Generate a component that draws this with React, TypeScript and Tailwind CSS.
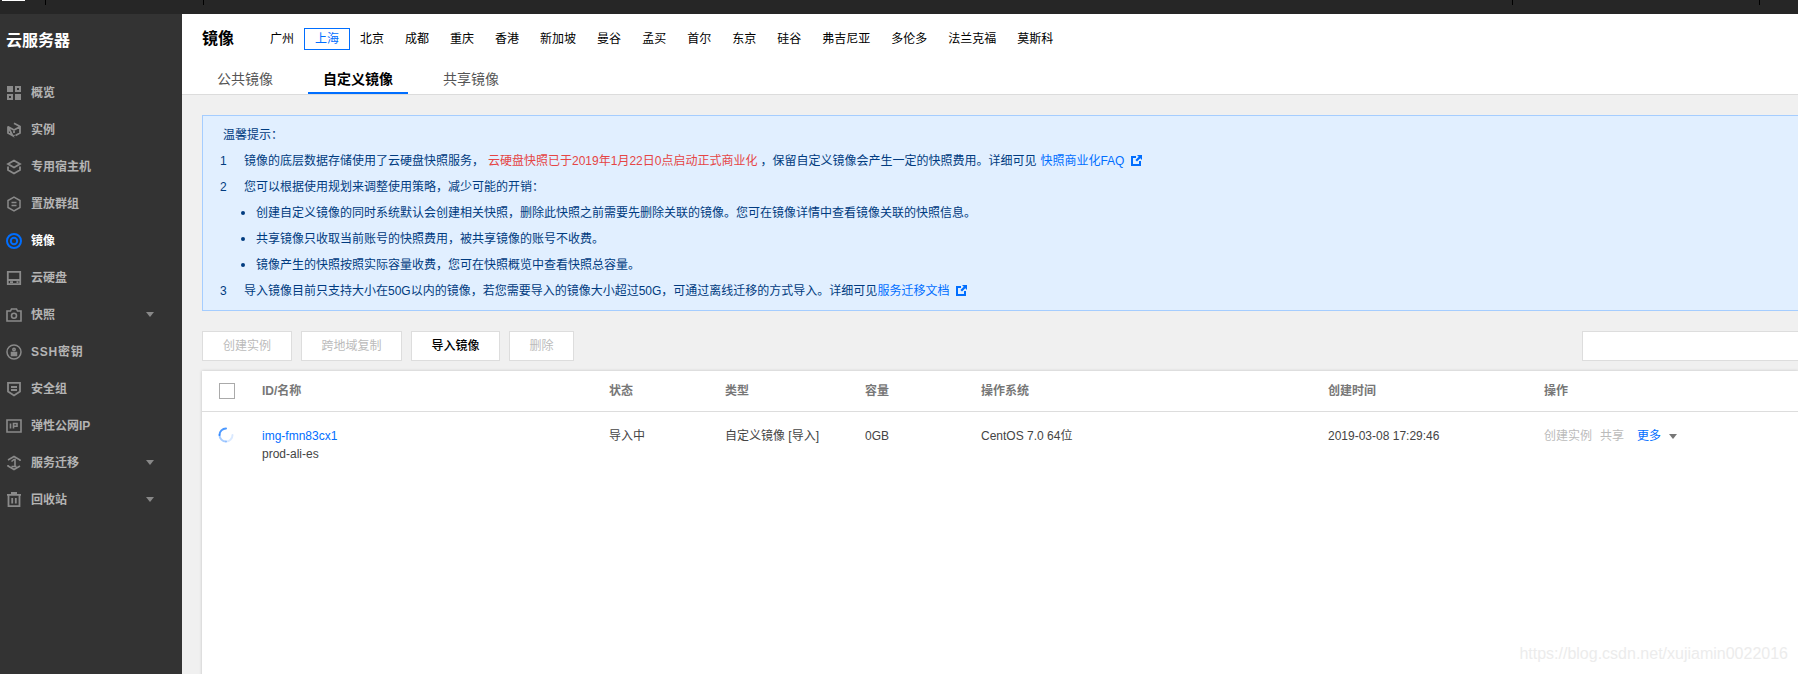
const font = "font-['Liberation_Sans','Noto_Sans_CJK_SC',sans-serif]"

const regions = ["广州", "上海", "北京", "成都", "重庆", "香港", "新加坡", "曼谷", "孟买", "首尔", "东京", "硅谷", "弗吉尼亚", "多伦多", "法兰克福", "莫斯科"]

function NavIcon({ name }: { name: string }) {
  const c = "#8a8a8a"
  const box = "h-4 w-4 shrink-0"
  switch (name) {
    case "overview":
      return (
        <svg className={box} viewBox="0 0 16 16" fill={c}>
          <path d="M1 1h6v6H1zM1 9h6v6H1zM9 9h6v6H9zM9 1h6v6H9zM11 3v2h2V3zM3 11v2h2v-2z" fillRule="evenodd" />
        </svg>
      )
    case "instance":
      return (
        <svg className={box} viewBox="0 0 16 16" fill="none" stroke={c} strokeWidth="1.8">
          <path d="M8 1.200 14 4.500v6.500L9.500 13.500M6.500 13.500 2 11V4.500zM2.500 5 8 8l5.500-3M8 8v3" />
          <circle cx="8" cy="13.500" r="0.800" fill={c} stroke="none" />
        </svg>
      )
    case "host":
      return (
        <svg className={box} viewBox="0 0 16 16" fill="none" stroke={c} strokeWidth="1.8">
          <path d="M8 1.500 14 5 8 8.500 2 5zM2 7.500v3.500L8 14.500l6-3.500V7.500" />
        </svg>
      )
    case "group":
      return (
        <svg className={box} viewBox="0 0 16 16" fill="none" stroke={c} strokeWidth="1.500">
          <path d="M8 1.200 14 4.500v7L8 14.800 2 11.500v-7zM5.500 6.500h5M5.500 9.500h5" />
        </svg>
      )
    case "image":
      return (
        <svg className="h-4 w-4 shrink-0" viewBox="0 0 16 16" fill="none" stroke="#006eff" strokeWidth="2">
          <circle cx="8" cy="8" r="7" />
          <circle cx="8" cy="8" r="3.200" />
        </svg>
      )
    case "disk":
      return (
        <svg className={box} viewBox="0 0 16 16" fill="none" stroke={c} strokeWidth="1.800">
          <path d="M1.800 1.800h12.400v12.400H1.800zM2 10h12M4 12.200h3M10.500 12.200h2" />
        </svg>
      )
    case "snapshot":
      return (
        <svg className={box} viewBox="0 0 16 16" fill="none" stroke={c} strokeWidth="1.600">
          <path d="M1 4h3.500l1-2h5l1 2H15v10H1z" />
          <circle cx="8" cy="8.800" r="2.500" />
        </svg>
      )
    case "ssh":
      return (
        <svg className={box} viewBox="0 0 16 16" fill="none" stroke={c} strokeWidth="1.500">
          <circle cx="8" cy="8" r="7" />
          <path d="M5.500 8.500h5v3h-5z" fill={c} />
          <circle cx="8" cy="5.500" r="1.200" />
        </svg>
      )
    case "security":
      return (
        <svg className={box} viewBox="0 0 16 16" fill="none" stroke={c} strokeWidth="1.800">
          <path d="M2 1.800h12v8.700L8 14.500l-6-4zM5 6h6M5 9h6" />
        </svg>
      )
    case "ip":
      return (
        <svg className={box} viewBox="0 0 16 16" fill="none" stroke={c} strokeWidth="1.600">
          <path d="M1 2h14v12H1zM4.500 5.500v5M7.500 10.500v-5h3.500v2.800H7.500" />
        </svg>
      )
    case "migrate":
      return (
        <svg className={box} viewBox="0 0 16 16" fill="none" stroke={c} strokeWidth="1.600">
          <path d="M2 5 8 1.500 14 5v1M14 11 8 14.500 2 11v-1M5.500 6.500 8 4.500h1v7M5.500 11.500h5" />
        </svg>
      )
    default:
      return (
        <svg className={box} viewBox="0 0 16 16" fill="none" stroke={c} strokeWidth="1.800">
          <path d="M1 2.800h14M2.500 3v11.200h11V3M6.200 6v5.500M9.800 6v5.500M5 1h6" />
        </svg>
      )
  }
}

const navItems = [
  { icon: "overview", label: "概览" },
  { icon: "instance", label: "实例" },
  { icon: "host", label: "专用宿主机" },
  { icon: "group", label: "置放群组" },
  { icon: "image", label: "镜像", active: true },
  { icon: "disk", label: "云硬盘" },
  { icon: "snapshot", label: "快照", arrow: true },
  { icon: "ssh", label: "SSH密钥" },
  { icon: "security", label: "安全组" },
  { icon: "ip", label: "弹性公网IP" },
  { icon: "migrate", label: "服务迁移", arrow: true },
  { icon: "recycle", label: "回收站", arrow: true },
]

function ExternalIcon() {
  return (
    <svg className="ml-[7px] inline-block h-[11px] w-[11px] align-[-1px]" viewBox="0 0 11 11" fill="#006eff">
      <path d="M0 1h5v2H2v6h6V6h2v5H0z" />
      <path d="M6 0h5v5L9.300 3.300 6 6.600 4.400 5l3.300-3.300z" />
    </svg>
  )
}

function Spinner() {
  return (
    <svg className="ml-[16px] h-4 w-4 shrink-0" viewBox="0 0 16 16" fill="none" strokeWidth="2" strokeLinecap="round">
      <path d="M8 1.500A6.500 6.500 0 0 0 1.500 8" stroke="#006eff" strokeOpacity="0.7" />
      <path d="M1.500 8A6.500 6.500 0 0 0 8 14.500" stroke="#006eff" strokeOpacity="0.35" />
      <path d="M8 14.500A6.500 6.500 0 0 0 14.500 8" stroke="#006eff" strokeOpacity="0.15" />
    </svg>
  )
}

function Caret({ color = "#888" }: { color?: string }) {
  return (
    <span
      className="inline-block h-0 w-0 border-x-[4px] border-t-[5px] border-x-transparent"
      style={{ borderTopColor: color }}
    />
  )
}

export default function App() {
  return (
    <div className={`relative flex h-[674px] w-[1798px] flex-col overflow-hidden bg-[#f0f0f0] text-xs text-[#444] ${font}`}>
      <div className="relative h-[14px] shrink-0 bg-[#262626]">
        <span className="absolute left-[2px] top-0 h-px w-[23px] bg-white" />
        <span className="absolute left-[45px] top-0 h-[5px] w-px bg-black" />
        <span className="absolute left-[203px] top-0 h-[5px] w-px bg-black" />
        <span className="absolute left-[1512px] top-0 h-[5px] w-px bg-black" />
        <span className="absolute left-[1759px] top-0 h-[5px] w-px bg-black" />
      </div>
      <div className="flex min-h-0 flex-1">
        <aside className="w-[182px] shrink-0 bg-[#333333]">
          <div className="flex h-[53px] items-center pl-[6px] text-base font-bold text-white">云服务器</div>
          <nav className="mt-[7px]">
            {navItems.map(item => (
              <div key={item.label} className="flex h-[37px] items-center pl-[6px] pr-[28px]">
                <NavIcon name={item.icon} />
                <span
                  className={`ml-[9px] flex-1 font-bold ${item.active ? "text-white" : "text-[#b4b4b4]"} ${item.icon === "ssh" ? "tracking-[0.8px]" : ""}`}
                >
                  {item.label}
                </span>
                {item.arrow && <Caret color="#888" />}
              </div>
            ))}
          </nav>
        </aside>

        <main className="min-w-0 flex-1">
          <header className="h-[81px] border-b border-[#dcdcdc] bg-white">
            <div className="flex h-[50px] items-center pl-[20px]">
              <h1 className="mr-[36px] text-base font-bold text-black">镜像</h1>
              <div className="flex items-center">
                {regions.map(r => (
                  <span
                    key={r}
                    className={
                      r === "上海"
                        ? "mx-[10px] flex h-[22px] w-[46px] items-center justify-center border border-[#006eff] text-[#006eff]"
                        : "mr-[21px] text-black first:mr-0"
                    }
                  >
                    {r}
                  </span>
                ))}
              </div>
            </div>
            <div className="flex h-[30px] gap-[13px] pl-[13px] text-sm">
              <span className="flex w-[100px] items-center justify-center text-[#555]">公共镜像</span>
              <span className="flex w-[100px] items-center justify-center border-b-2 border-[#006eff] pt-[2px] font-bold text-black">
                自定义镜像
              </span>
              <span className="flex w-[100px] items-center justify-center text-[#555]">共享镜像</span>
            </div>
          </header>

          <div className="pl-[20px]">
            <section className="mt-[20px] h-[196px] border border-r-0 border-[#a5cdff] bg-[#e1efff] pl-[17px] pt-[6px] text-[#003b80]">
              <p className="h-[26px] pl-[3px] leading-[26px]">温馨提示：</p>
              <ol className="leading-[26px]">
                <li className="flex h-[26px]">
                  <span className="w-[24px]">1</span>
                  <span>
                    镜像的底层数据存储使用了云硬盘快照服务，
                    <span className="ml-[4px] text-[#e54545]">云硬盘快照已于2019年1月22日0点启动正式商业化</span>
                    <span className="ml-[3px]">，保留自定义镜像会产生一定的快照费用。详细可见</span>
                    <span className="ml-[4px] text-[#006eff]">快照商业化FAQ</span>
                    <ExternalIcon />
                  </span>
                </li>
                <li className="flex h-[26px]">
                  <span className="w-[24px]">2</span>
                  <span>您可以根据使用规划来调整使用策略，减少可能的开销：</span>
                </li>
                {[
                  "创建自定义镜像的同时系统默认会创建相关快照，删除此快照之前需要先删除关联的镜像。您可在镜像详情中查看镜像关联的快照信息。",
                  "共享镜像只收取当前账号的快照费用，被共享镜像的账号不收费。",
                  "镜像产生的快照按照实际容量收费，您可在快照概览中查看快照总容量。",
                ].map(t => (
                  <li key={t} className="flex h-[26px] items-center pl-[21px]">
                    <span className="mr-[11px] h-[4px] w-[4px] rounded-full bg-[#003b80]" />
                    <span>{t}</span>
                  </li>
                ))}
                <li className="flex h-[26px]">
                  <span className="w-[24px]">3</span>
                  <span>
                    导入镜像目前只支持大小在50G以内的镜像，若您需要导入的镜像大小超过50G，可通过离线迁移的方式导入。详细可见
                    <span className="text-[#006eff]">服务迁移文档</span>
                    <ExternalIcon />
                  </span>
                </li>
              </ol>
            </section>

            <div className="mt-[20px] flex items-center justify-between">
              <div className="flex gap-[9px]">
                <button className="h-[30px] w-[90px] border border-[#ddd] bg-white text-[#bbb]">创建实例</button>
                <button className="h-[30px] w-[101px] border border-[#ddd] bg-white text-[#bbb]">跨地域复制</button>
                <button className="h-[30px] w-[89px] border border-[#ddd] bg-white font-medium text-black">导入镜像</button>
                <button className="h-[30px] w-[65px] border border-[#ddd] bg-white text-[#bbb]">删除</button>
              </div>
              <div className="h-[30px] w-[216px] border border-r-0 border-[#ddd] bg-white" />
            </div>

            <div className="mt-[10px] h-[320px] bg-white shadow-[0_0_3px_rgba(0,0,0,0.2)]">
              <div className="flex h-[41px] items-center border-b border-[#ddd] font-bold text-[#777]">
                <span className="ml-[17px] h-[16px] w-[16px] border border-[#aaa]" />
                <span className="ml-[27px] w-[347px]">ID/名称</span>
                <span className="w-[116px]">状态</span>
                <span className="w-[140px]">类型</span>
                <span className="w-[116px]">容量</span>
                <span className="w-[347px]">操作系统</span>
                <span className="w-[216px]">创建时间</span>
                <span>操作</span>
              </div>
              <div className="flex pt-[15px]">
                <Spinner />
                <div className="ml-[28px] w-[347px]">
                  <div className="h-[18px] leading-[18px] text-[#006eff]">img-fmn83cx1</div>
                  <div className="h-[18px] leading-[18px]">prod-ali-es</div>
                </div>
                <span className="h-[18px] w-[116px] leading-[18px]">导入中</span>
                <span className="h-[18px] w-[140px] leading-[18px]">自定义镜像 [导入]</span>
                <span className="h-[18px] w-[116px] leading-[18px]">0GB</span>
                <span className="h-[18px] w-[347px] leading-[18px]">CentOS 7.0 64位</span>
                <span className="h-[18px] w-[216px] leading-[18px]">2019-03-08 17:29:46</span>
                <span className="flex h-[18px] items-center leading-[18px] text-[#bbb]">
                  创建实例
                  <span className="ml-[8px]">共享</span>
                  <span className="ml-[13px] text-[#006eff]">更多</span>
                  <span className="ml-[8px] flex items-center">
                    <Caret color="#777" />
                  </span>
                </span>
              </div>
            </div>
          </div>
        </main>
      </div>
      <span className="absolute bottom-[8px] right-[10px] text-base text-[#ececec]">https://blog.csdn.net/xujiamin0022016</span>
    </div>
  )
}
